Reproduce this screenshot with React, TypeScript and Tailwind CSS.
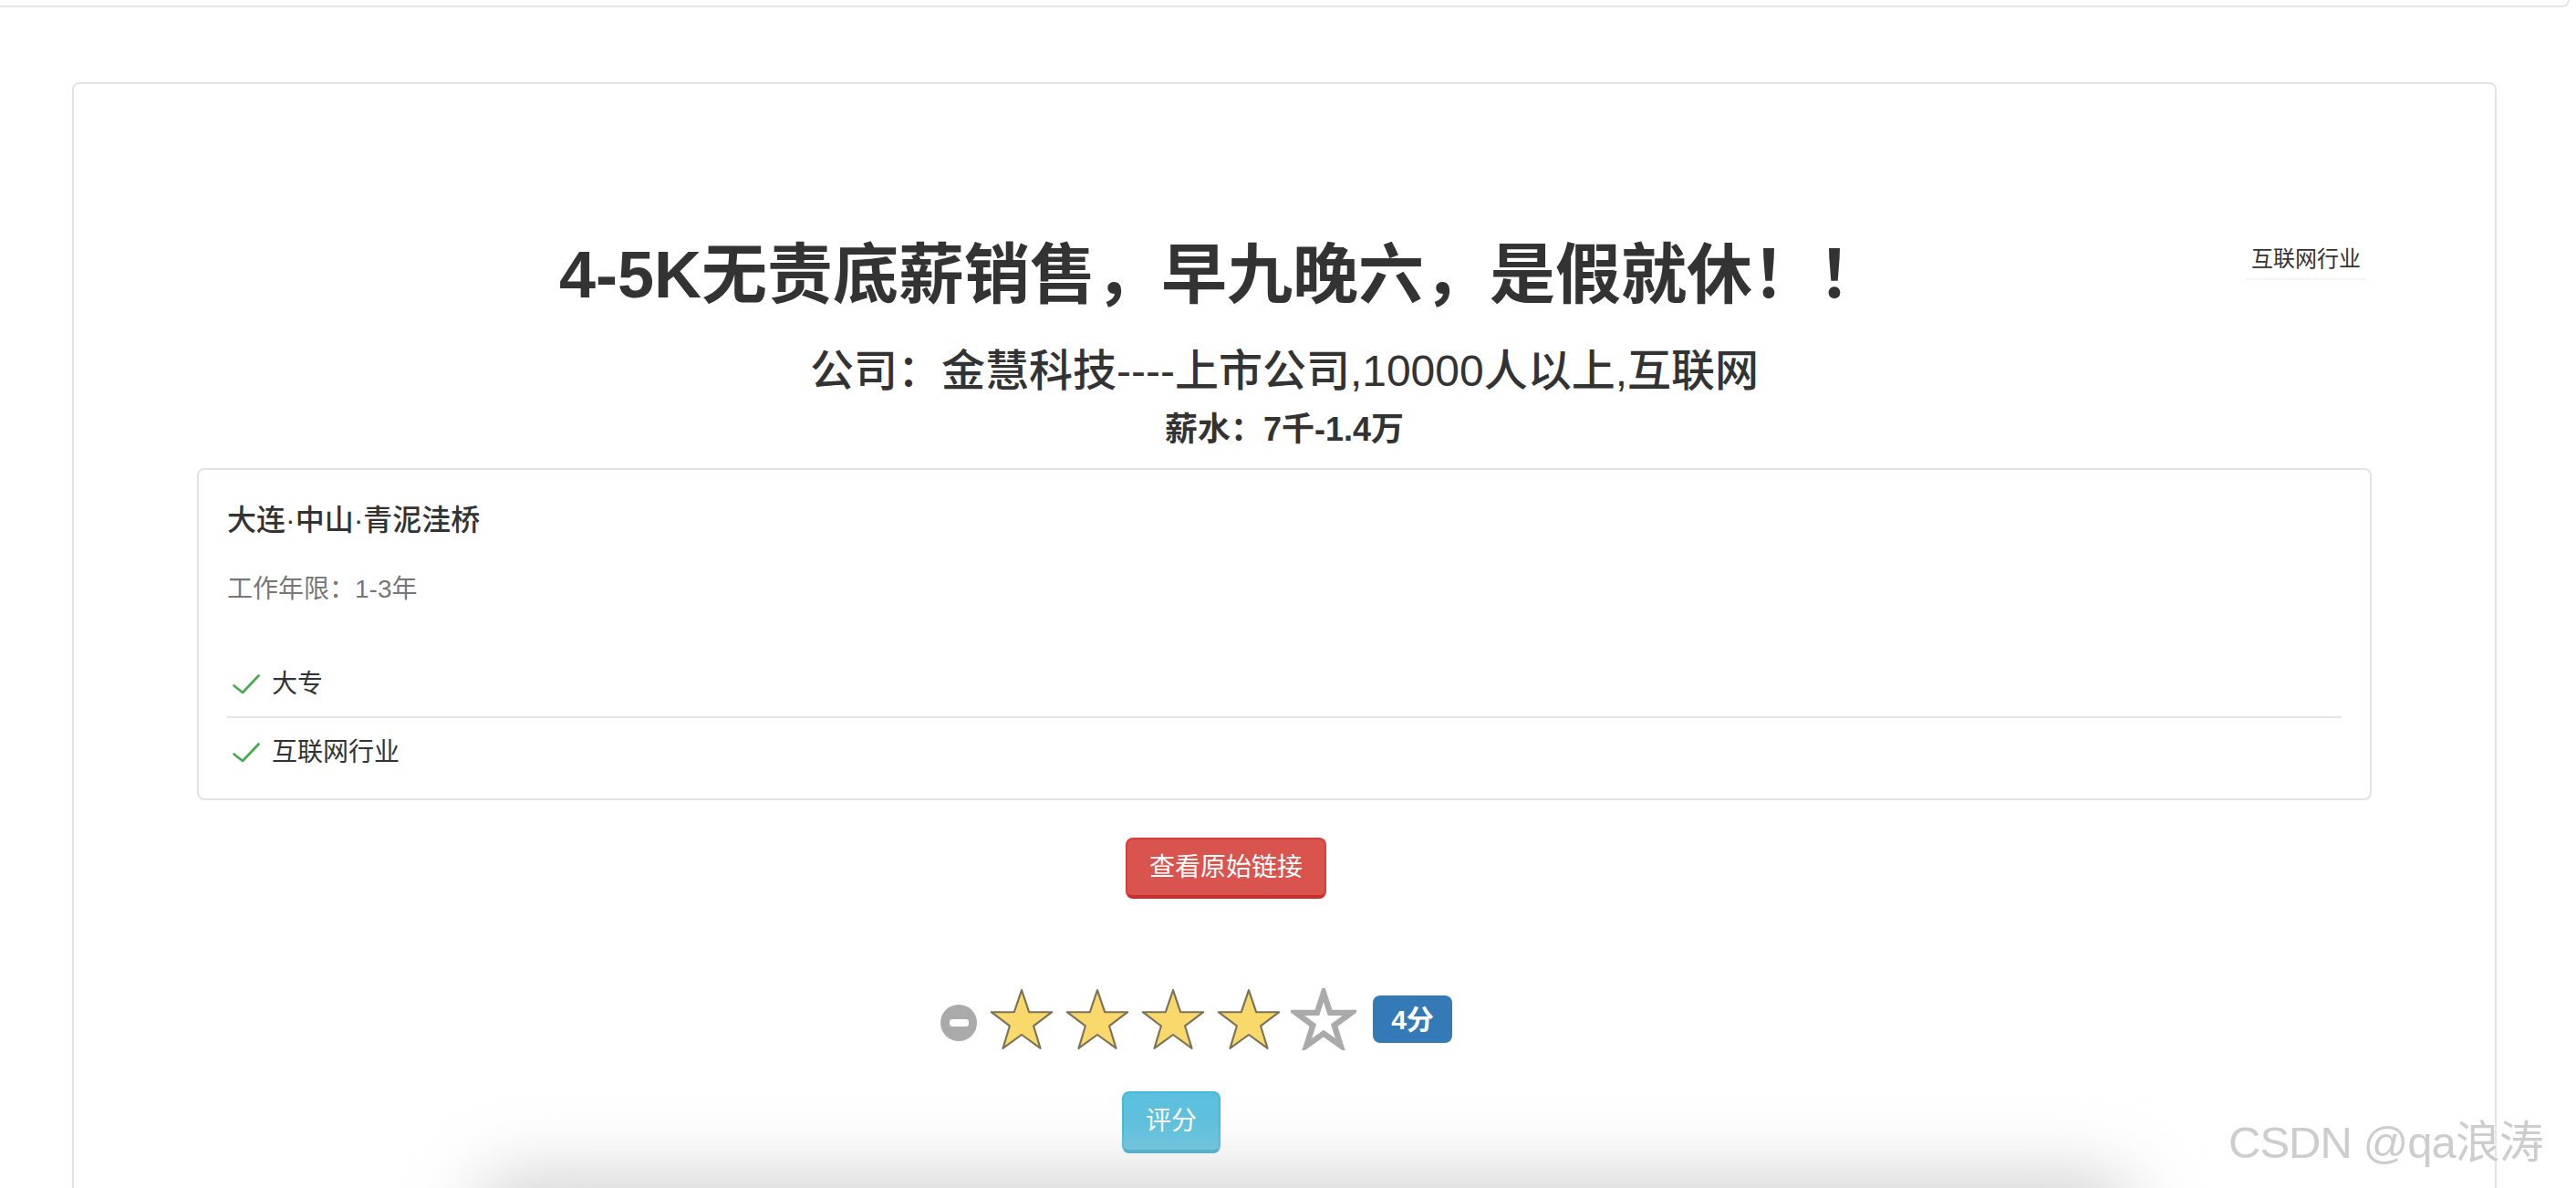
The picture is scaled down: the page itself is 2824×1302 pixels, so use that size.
import React from "react";

const FilledStar = () => (
  <svg width="74" height="68" viewBox="0 0 100 96" className="shrink-0">
    <polygon
      points="50,3 61.5,37 97,37 68.5,58.5 79,93 50,72 21,93 31.5,58.5 3,37 38.5,37"
      fill="#f9d86c"
      stroke="#7b7257"
      strokeWidth="3"
      strokeLinejoin="round"
    />
  </svg>
);

const EmptyStar = () => (
  <svg width="72" height="68" viewBox="0 0 100 96" className="shrink-0">
    <polygon
      points="50,7 60,38 93,38 66.5,57.5 76.5,89 50,70 23.5,89 33.5,57.5 7,38 40,38"
      fill="#ffffff"
      stroke="#aaaaaa"
      strokeWidth="9"
      strokeLinejoin="miter"
    />
  </svg>
);

const Check = () => (
  <svg width="30" height="22" viewBox="0 0 30 22" className="shrink-0">
    <polyline
      points="1.5,12.5 11,20 28.5,1.5"
      fill="none"
      stroke="#45a94f"
      strokeWidth="2.6"
      strokeLinecap="round"
      strokeLinejoin="round"
    />
  </svg>
);

export default function App() {
  return (
    <div className="relative h-[1302px] w-[2824px] overflow-hidden bg-white font-['Liberation_Sans','Noto_Sans_CJK_SC',sans-serif] text-[#333]">
      {/* navbar remnant */}
      <div className="h-[8px] w-[2817px] rounded-br-[10px] border-b-2 border-r-2 border-[#e6e6e6] bg-white" />

      {/* main card */}
      <div className="ml-[79px] mt-[82px] h-[1400px] w-[2658px] rounded-[8px] border-2 border-[#e3e3e3] bg-white px-[135px] pt-[170px]">
        {/* header row */}
        <div className="flex items-start">
          <div className="flex-1 text-center text-[72px] font-semibold leading-[79px] text-[#333]">
            4-5K无责底薪销售，早九晚六，是假就休！！
          </div>
          <div className="mr-[6px] mt-[5px] w-[132px] border-b-2 border-[#f4f4f4] pb-[4px] text-center text-[24px] leading-[34px] text-[#333]">
            互联网行业
          </div>
        </div>

        <div className="mt-[39px] text-center text-[48px] font-medium leading-[53px] text-[#333]">
          公司：金慧科技----上市公司,10000人以上,互联网
        </div>
        <div className="mt-[18px] text-center text-[36px] font-semibold leading-[40px] text-[#333]">
          薪水：7千-1.4万
        </div>

        {/* detail panel */}
        <div className="mt-[22px] rounded-[8px] border-2 border-[#e2e2e2] px-[31px] pb-[30px] pt-[37px]">
          <div className="text-[32px] font-medium leading-[36px] text-[#333]">大连·中山·青泥洼桥</div>
          <div className="mt-[38px] text-[28px] leading-[40px] text-[#777]">工作年限：1-3年</div>
          <div className="mt-[64px] flex items-center gap-[13px] pb-[15px] pl-[6px] text-[28px] leading-[40px] text-[#333]">
            <Check />
            <span>大专</span>
          </div>
          <div className="border-t-2 border-[#e5e5e5]" />
          <div className="flex items-center gap-[13px] pl-[6px] pt-[18px] text-[28px] leading-[40px] text-[#333]">
            <Check />
            <span>互联网行业</span>
          </div>
        </div>

        {/* original link button */}
        <div className="mt-[41px] flex">
          <button className="ml-[1018px] h-[67px] w-[220px] rounded-[8px] border-2 border-b-[4px] border-[#d43f3a] border-b-[#c9302c] bg-[#d9534f] text-[28px] leading-[40px] text-white">
            查看原始链接
          </button>
        </div>

        {/* rating row */}
        <div className="ml-[815px] mt-[99px] flex h-[66px] items-center">
          <div className="mt-[8px] flex h-[40px] w-[40px] shrink-0 items-center justify-center rounded-full bg-[#aaaaaa]">
            <div className="h-[8px] w-[21px] rounded-[3px] bg-white" />
          </div>
          <div className="ml-[12px] flex items-center gap-[9px]">
            <FilledStar />
            <FilledStar />
            <FilledStar />
            <FilledStar />
            <EmptyStar />
          </div>
          <div className="ml-[18px] flex h-[52px] w-[87px] items-center justify-center rounded-[8px] bg-[#337ab7] text-[30px] font-bold text-white">
            4分
          </div>
        </div>

        {/* rate button */}
        <div className="mt-[46px] flex">
          <button className="ml-[1014px] h-[68px] w-[108px] rounded-[8px] border-2 border-b-[4px] border-[#46b8da] border-b-[#31a6c9] bg-[#5bc0de] text-[28px] leading-[40px] text-white">
            评分
          </button>
        </div>
      </div>

      {/* bottom shadow of element below */}
      <div className="absolute left-[520px] top-[1290px] h-[90px] w-[1820px] rounded-full bg-[#cfcfcf] blur-[40px]" />

      {/* watermark */}
      <div className="absolute left-[2443px] top-[1222px] whitespace-nowrap text-[49px] leading-[60px] tracking-[-1px] text-[#cdcdcd] [text-shadow:0_0_2px_#ffffff,0_0_2px_#ffffff]">
        CSDN @qa浪涛
      </div>
    </div>
  );
}
